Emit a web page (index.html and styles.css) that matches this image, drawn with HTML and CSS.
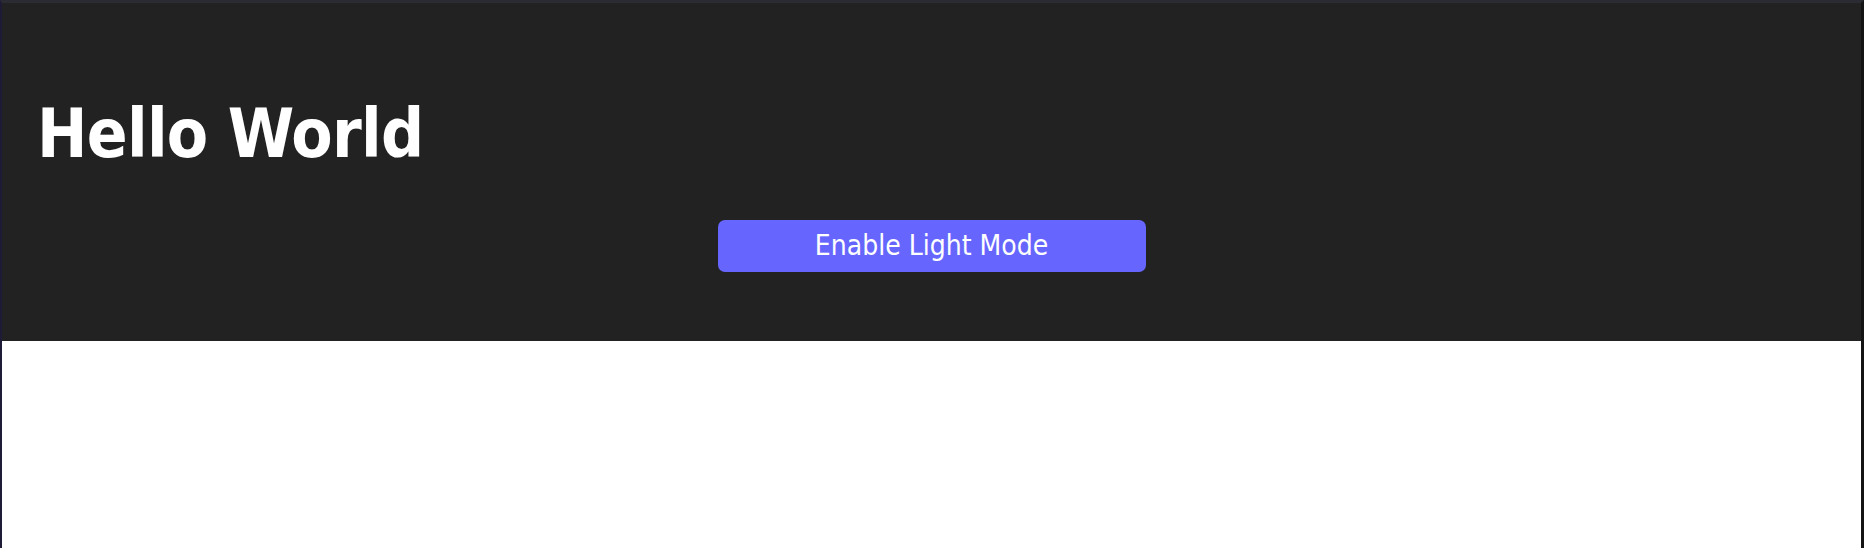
FILE: index.html
```html
<!DOCTYPE html>
<html lang="en">
<head>
<meta charset="utf-8">
<title>Hello World</title>
<link rel="stylesheet" href="styles.css">
</head>
<body>
<div class="frame">
  <header class="app">
    <h1 class="title">Hello World</h1>
    <button class="toggle" type="button">Enable Light Mode</button>
  </header>
</div>
</body>
</html>
```

FILE: styles.css
```css
html, body {
  margin: 0;
  padding: 0;
  background: #ffffff;
}

.frame {
  box-sizing: border-box;
  height: 548px;
  border-top: 3px solid #2b2b33;
  border-left: 2px solid #1d1b35;
  border-right: 3px solid #141414;
  background: #ffffff;
}

.app {
  box-sizing: border-box;
  height: 338px;
  background: #222222;
  padding: 91px 35px 0;
  display: flex;
  flex-direction: column;
}

.title {
  margin: 0;
  font-family: "DejaVu Sans", sans-serif;
  font-stretch: condensed;
  font-weight: bold;
  font-size: 67px;
  line-height: 80px;
  letter-spacing: -0.7px;
  color: #ffffff;
}

.toggle {
  margin: 46px auto 0;
  width: 428px;
  height: 52px;
  border: none;
  border-radius: 7px;
  background: #6666ff;
  color: #ffffff;
  font-family: "DejaVu Sans", sans-serif;
  font-stretch: condensed;
  font-size: 28px;
  line-height: 1;
  padding: 0;
  display: flex;
  align-items: center;
  justify-content: center;
}
```
